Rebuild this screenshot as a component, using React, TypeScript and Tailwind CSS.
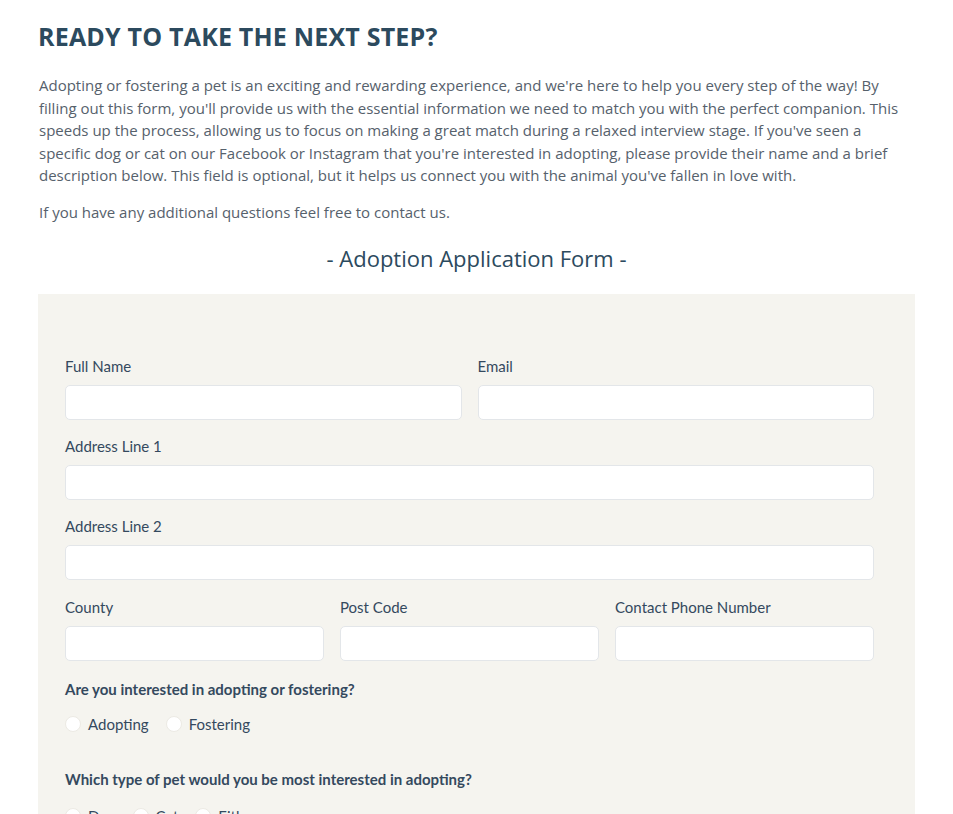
import type { ReactNode } from 'react'

function Field({ label, className = '' }: { label: string; className?: string }) {
  return (
    <div className={className}>
      <label className="block text-[15px] leading-[20px] text-[#34495e]">{label}</label>
      <input
        type="text"
        className="mt-[9px] block h-[35px] w-full rounded-[5px] border border-[#e3e6e9] bg-white px-3 outline-none"
      />
    </div>
  )
}

function Radio({ children }: { children: ReactNode }) {
  return (
    <label className="flex items-center gap-[7px]">
      <span className="h-[16px] w-[16px] rounded-full border border-[#eceae4] bg-white" />
      <span className="text-[15px] text-[#34495e]">{children}</span>
    </label>
  )
}

export default function App() {
  return (
    <div className="min-h-screen bg-white">
      <div className="w-[877px] pt-[18px]" style={{ marginLeft: 38 }}>
        <h1 className="font-['Open_Sans',sans-serif] text-[25px] font-bold leading-[36px] tracking-[0.2px] text-[#2c4a5e]">
          READY TO TAKE THE NEXT STEP?
        </h1>

        <div className="mt-[20px] pl-px font-['Open_Sans',sans-serif] text-[15px] leading-[22.5px] text-[#56616c]">
          <p>
            Adopting or fostering a pet is an exciting and rewarding experience, and we're here to help you every step
            of the way! By filling out this form, you'll provide us with the essential information we need to match you
            with the perfect companion. This speeds up the process, allowing us to focus on making a great match during
            a relaxed interview stage. If you've seen a specific dog or cat on our Facebook or Instagram that you're
            interested in adopting, please provide their name and a brief description below. This field is optional,
            but it helps us connect you with the animal you've fallen in love with.
          </p>
          <p className="mt-[14px]">If you have any additional questions feel free to contact us.</p>
        </div>

        <h2 className="mt-[19px] text-center font-['Open_Sans',sans-serif] text-[22px] leading-[32px] text-[#2c4a5e]">
          - Adoption Application Form -
        </h2>

        <div className="mt-[20px] bg-[#f5f4ef] pb-10 pl-[27px] pr-[41px] pt-[62px] font-['Lato',sans-serif]">
          <div className="grid grid-cols-2 gap-x-[16px]">
            <Field label="Full Name" />
            <Field label="Email" />
          </div>
          <Field label="Address Line 1" className="mt-[16px]" />
          <Field label="Address Line 2" className="mt-[16px]" />
          <div className="mt-[17px] grid grid-cols-3 gap-x-[16px]">
            <Field label="County" />
            <Field label="Post Code" />
            <Field label="Contact Phone Number" />
          </div>

          <p className="mt-[18px] text-[15px] font-bold leading-[20px] text-[#34495e]">
            Are you interested in adopting or fostering?
          </p>
          <div className="mt-[14px] flex items-center gap-[17px]">
            <Radio>Adopting</Radio>
            <Radio>Fostering</Radio>
          </div>

          <p className="mt-[33px] text-[15px] font-bold leading-[20px] text-[#34495e]">
            Which type of pet would you be most interested in adopting?
          </p>
          <div className="mt-[16px] flex items-center gap-[17px]">
            <Radio>Dog</Radio>
            <Radio>Cat</Radio>
            <Radio>Either</Radio>
          </div>
        </div>
      </div>
    </div>
  )
}
